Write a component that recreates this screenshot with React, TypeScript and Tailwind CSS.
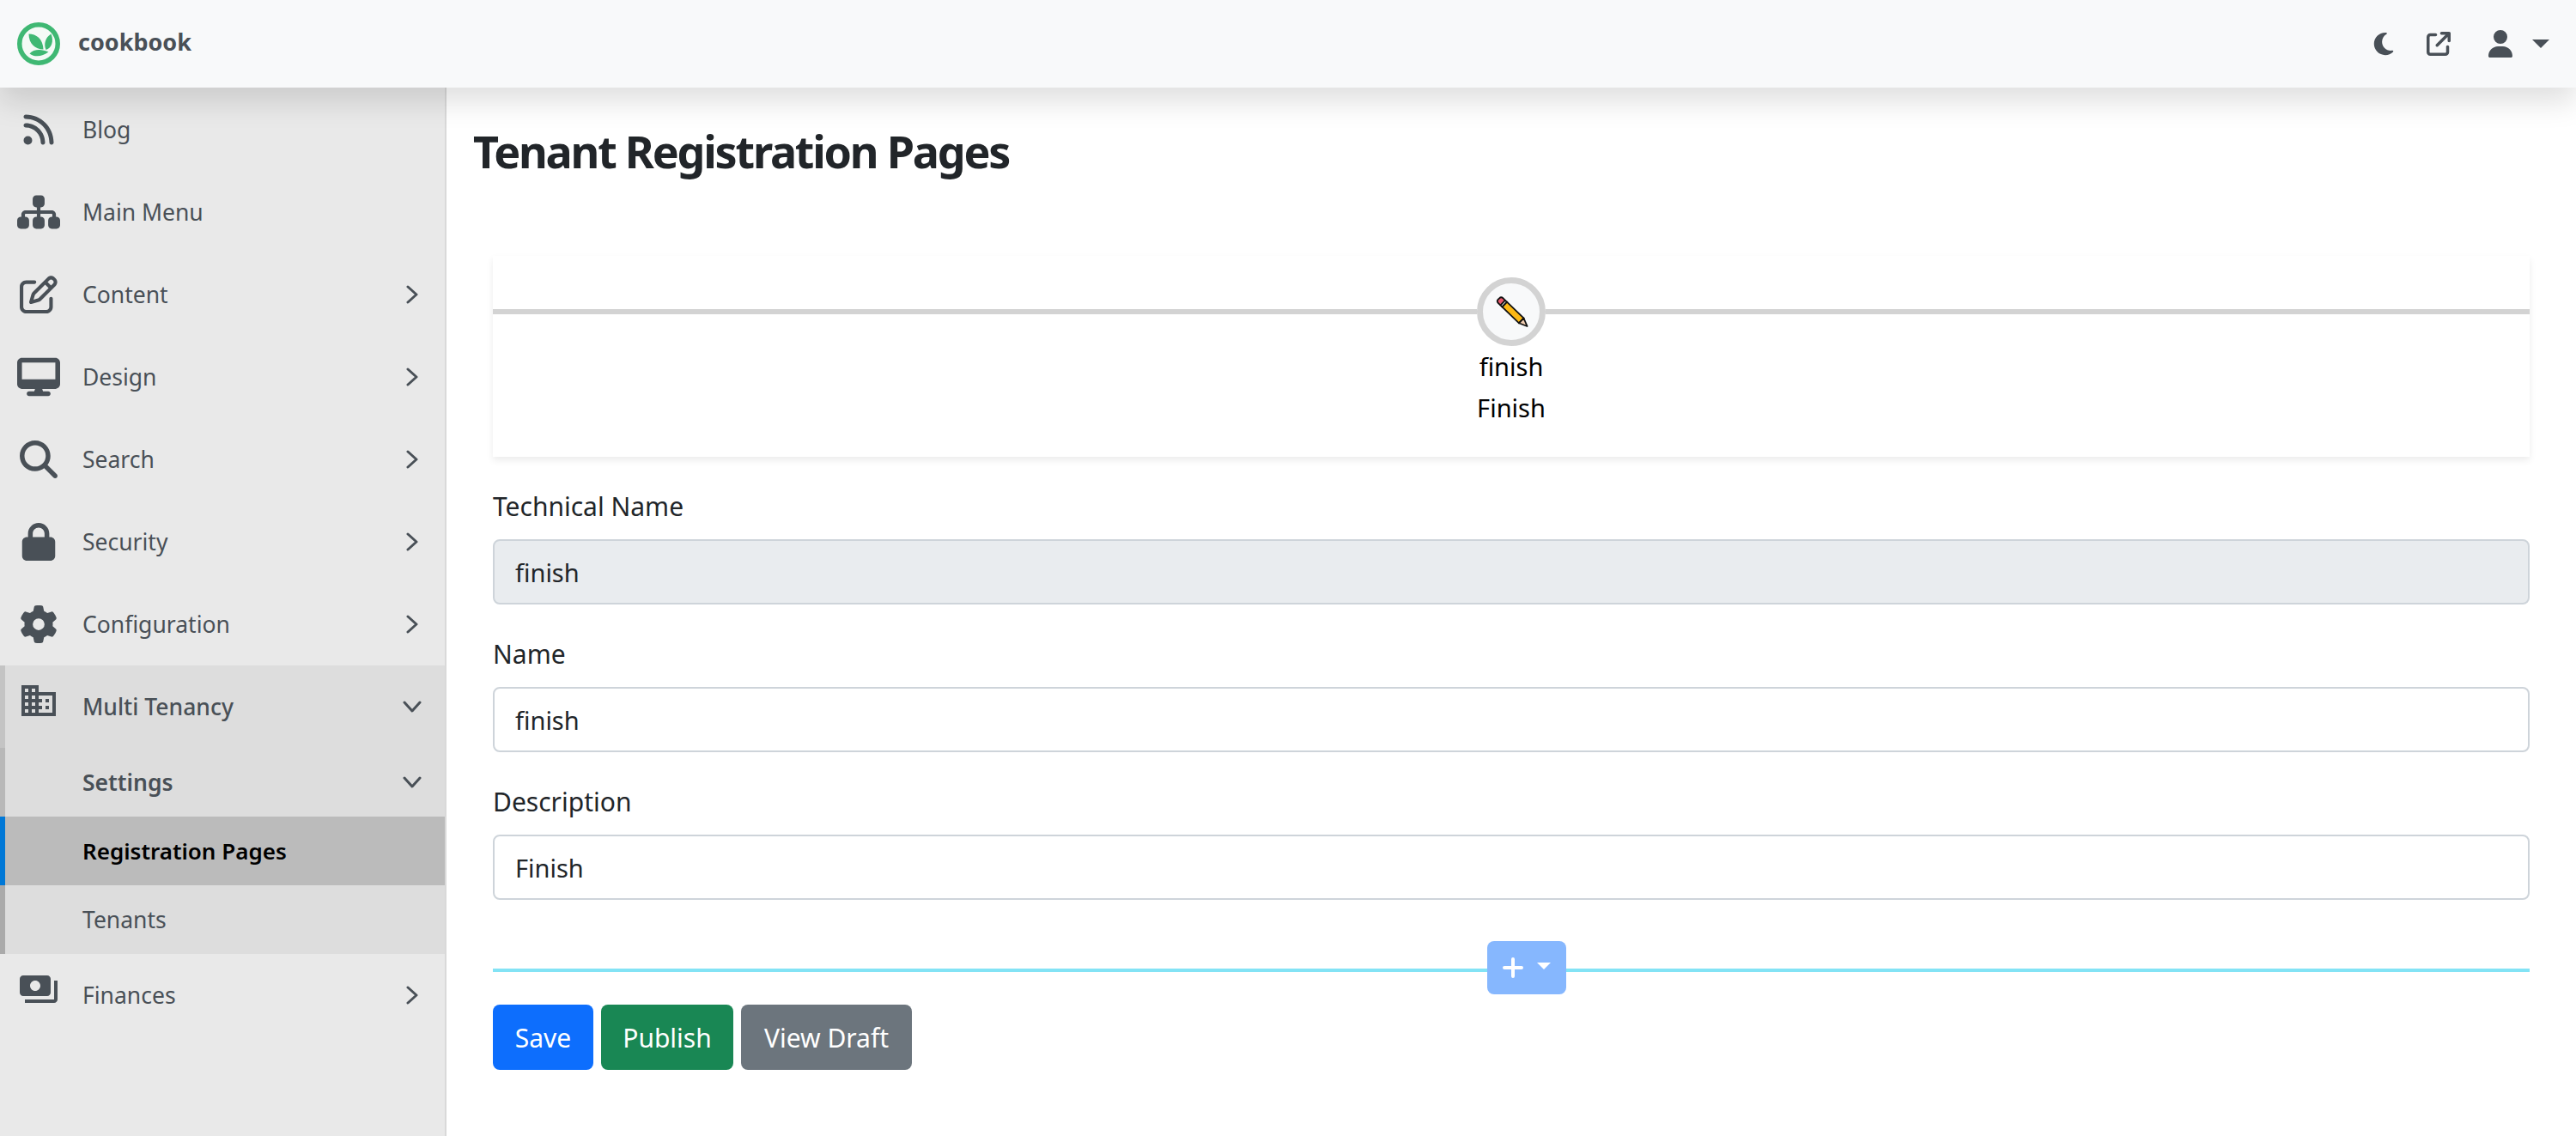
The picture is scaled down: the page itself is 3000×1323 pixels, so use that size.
import React from 'react';
import {
  FaArrowUpRightFromSquare,
  FaDesktop,
  FaGear,
  FaLock,
  FaMagnifyingGlass,
  FaMoon,
  FaRegPenToSquare,
  FaRss,
  FaSitemap,
  FaUser,
} from 'react-icons/fa6';
import { MdDomain, MdPayments } from 'react-icons/md';

const Logo = () => (
  <svg viewBox="0 0 50 50" className="w-[50px] h-[50px] shrink-0">
    <circle cx="25" cy="25" r="22.25" fill="#f4faf6" stroke="#3fb873" strokeWidth="5.5" />
    <path d="M13.500 13.500C22 13.500 30 19 30.500 31.500C21 31.500 13.500 25 13.500 13.500Z" fill="#3fb873" />
    <path d="M39.500 13.500C43 22 40 30 33.500 32C30.500 25 33 17.500 39.500 13.500Z" fill="#3fb873" />
    <path d="M14.500 36.500C19 31 28.500 31 36.500 34.500C29.500 40 20.500 41 14.500 36.500Z" fill="#3fb873" />
  </svg>
);

const ChevronRight = () => (
  <svg viewBox="0 0 14 22" className="w-[14px] h-[22px]" fill="none" stroke="#495057" strokeWidth="3" strokeLinecap="round" strokeLinejoin="round">
    <path d="M2 2l10 9-10 9" />
  </svg>
);

const ChevronDown = () => (
  <svg viewBox="0 0 22 14" className="w-[22px] h-[14px]" fill="none" stroke="#495057" strokeWidth="3" strokeLinecap="round" strokeLinejoin="round">
    <path d="M2 2l9 10 9-10" />
  </svg>
);

const Caret = ({ className }: { className: string }) => (
  <svg viewBox="0 0 20 10" className={className}>
    <path d="M0 0h20L10 10z" fill="currentColor" />
  </svg>
);

const Pencil = () => (
  <svg viewBox="0 0 40 40" className="w-[40px] h-[40px] ml-[3px] mt-[2px]">
    <g transform="rotate(44 20 20)">
      <rect x="-3" y="16" width="8" height="8" rx="3" fill="#e8596c" stroke="#111" strokeWidth="1.800" />
      <rect x="3.500" y="16" width="3" height="8" fill="#d8d8d8" stroke="#111" strokeWidth="1.800" />
      <rect x="6.500" y="16" width="27" height="8" fill="#fdb813" stroke="#111" strokeWidth="1.800" />
      <path d="M33.500 16L43 20L33.500 24Z" fill="#f1cdb0" stroke="#111" strokeWidth="1.800" strokeLinejoin="round" />
    </g>
  </svg>
);

const topItems = [
  { label: 'Blog', icon: <FaRss size={40} /> },
  { label: 'Main Menu', icon: <FaSitemap size={50} /> },
  { label: 'Content', icon: <FaRegPenToSquare size={44} />, more: true },
  { label: 'Design', icon: <FaDesktop size={50} />, more: true },
  { label: 'Search', icon: <FaMagnifyingGlass size={44} />, more: true },
  { label: 'Security', icon: <FaLock size={44} />, more: true },
  { label: 'Configuration', icon: <FaGear size={44} />, more: true },
];

const NavRow = ({ label, icon, more }: { label: string; icon: React.ReactNode; more?: boolean }) => (
  <div className="h-[96px] flex items-center text-[#495057]">
    <div className="w-[70px] pl-[20px] shrink-0">
      <div className="w-[50px] flex justify-center">{icon}</div>
    </div>
    <span className="pl-[26px] pt-[2px] text-[26.5px] flex-1">{label}</span>
    {more && (
      <div className="pr-[31px] flex">
        <ChevronRight />
      </div>
    )}
  </div>
);

const Field = ({ label, value, disabled }: { label: string; value: string; disabled?: boolean }) => (
  <div className="mb-[32px]">
    <label className="block text-[30px] leading-[52px] mb-[12px] text-[#212529]">{label}</label>
    <input
      readOnly
      value={value}
      disabled={disabled}
      className={`block w-full h-[76px] px-[24px] text-[29px] text-[#212529] border-2 border-[#ced4da] rounded-[8px] ${
        disabled ? 'bg-[#e9ecef]' : 'bg-white'
      }`}
    />
  </div>
);

export default function App() {
  return (
    <div className="h-screen flex flex-col overflow-hidden bg-white font-['Noto_Sans',sans-serif]">
      {/* Top bar */}
      <header className="relative z-10 h-[102px] shrink-0 flex items-center bg-[#f8f9fa] shadow-[0_16px_32px_rgba(0,0,0,0.13)] pl-[20px]">
        <Logo />
        <span className="ml-[21px] text-[27px] font-bold text-[#495057] -mt-[3px]">cookbook</span>
        <div className="ml-auto flex items-center text-[#495057]">
          <FaMoon size={30} />
          <FaArrowUpRightFromSquare size={28} className="ml-[35px]" />
          <FaUser size={32} className="ml-[42px]" />
          <Caret className="w-[20px] h-[10px] ml-[21px] mr-[31px]" />
        </div>
      </header>

      <div className="flex-1 flex min-h-0">
        {/* Sidebar */}
        <aside className="w-[520px] shrink-0 bg-[#e9e9e9] border-r-2 border-[#d9d9d9] pt-px">
          {topItems.map((item) => (
            <NavRow key={item.label} {...item} />
          ))}

          <div className="bg-[#dddddd] text-[#495057]">
            <div className="h-[96px] flex items-center border-l-[6px] border-[#c4c4c4]">
              <div className="w-[64px] pl-[14px] shrink-0 -mt-[14px] flex justify-center">
                <MdDomain size={48} />
              </div>
              <span className="pl-[26px] pt-[2px] text-[26.5px] font-medium flex-1">Multi Tenancy</span>
              <div className="pr-[27px] flex">
                <ChevronDown />
              </div>
            </div>
            <div className="h-[80px] flex items-center border-l-[6px] border-[#b8b8b8] pl-[90px]">
              <span className="pt-[2px] text-[26.5px] font-semibold flex-1">Settings</span>
              <div className="pr-[27px] flex">
                <ChevronDown />
              </div>
            </div>
            <div className="h-[80px] flex items-center border-l-[6px] border-[#0078d7] pl-[90px] bg-[#bbbbbb] text-black">
              <span className="pt-[1px] text-[26px] font-semibold">Registration Pages</span>
            </div>
            <div className="h-[80px] flex items-center border-l-[6px] border-[#aaaaaa] pl-[90px]">
              <span className="pt-[1px] text-[26.5px]">Tenants</span>
            </div>
          </div>

          <NavRow label="Finances" icon={<MdPayments size={48} className="-mt-[14px]" />} more />
        </aside>

        {/* Main content */}
        <main className="flex-1 min-w-0 px-[31px] pt-[40px]">
          <h1 className="text-[52px] leading-[67px] font-bold tracking-[-2.2px] text-[#212529]">Tenant Registration Pages</h1>

          <div className="mt-[89px] mx-[23px]">
            <div className="bg-white shadow-[0_4px_8px_rgba(0,0,0,0.08)] pt-[25px] pb-[33px] mb-[32px]">
              <div className="flex items-center">
                <div className="flex-1 h-[6px] bg-[#d3d3d3]" />
                <div className="w-[80px] h-[80px] rounded-full border-[7px] border-[#d3d3d3] bg-[#f8f9fa] flex items-center justify-center">
                  <Pencil />
                </div>
                <div className="flex-1 h-[6px] bg-[#d3d3d3]" />
              </div>
              <div className="text-center text-[29px] leading-[48px] text-black">
                <div>finish</div>
                <div>Finish</div>
              </div>
            </div>

            <Field label="Technical Name" value="finish" disabled />
            <Field label="Name" value="finish" />
            <Field label="Description" value="Finish" />

            <div className="flex items-start mt-[48px]">
              <div className="w-[1158px] h-[4px] mt-[32px] bg-[#83e3f5]" />
              <button className="w-[92px] h-[62px] rounded-[8px] bg-[#86b7fe] text-white flex items-center justify-center">
                <svg viewBox="0 0 24 24" className="w-[24px] h-[24px]" fill="none" stroke="white" strokeWidth="4" strokeLinecap="round">
                  <path d="M12 2v20M2 12h20" />
                </svg>
                <Caret className="w-[16px] h-[8px] ml-[16px] -mt-[4px]" />
              </button>
              <div className="flex-1 h-[4px] mt-[32px] bg-[#83e3f5]" />
            </div>

            <div className="flex gap-[9px] mt-[12px]">
              <button className="w-[117px] h-[76px] rounded-[8px] bg-[#0d6efd] text-white text-[30px]">Save</button>
              <button className="w-[154px] h-[76px] rounded-[8px] bg-[#198754] text-white text-[30px]">Publish</button>
              <button className="w-[199px] h-[76px] rounded-[8px] bg-[#6c757d] text-white text-[30px]">View Draft</button>
            </div>
          </div>
        </main>
      </div>
    </div>
  );
}
